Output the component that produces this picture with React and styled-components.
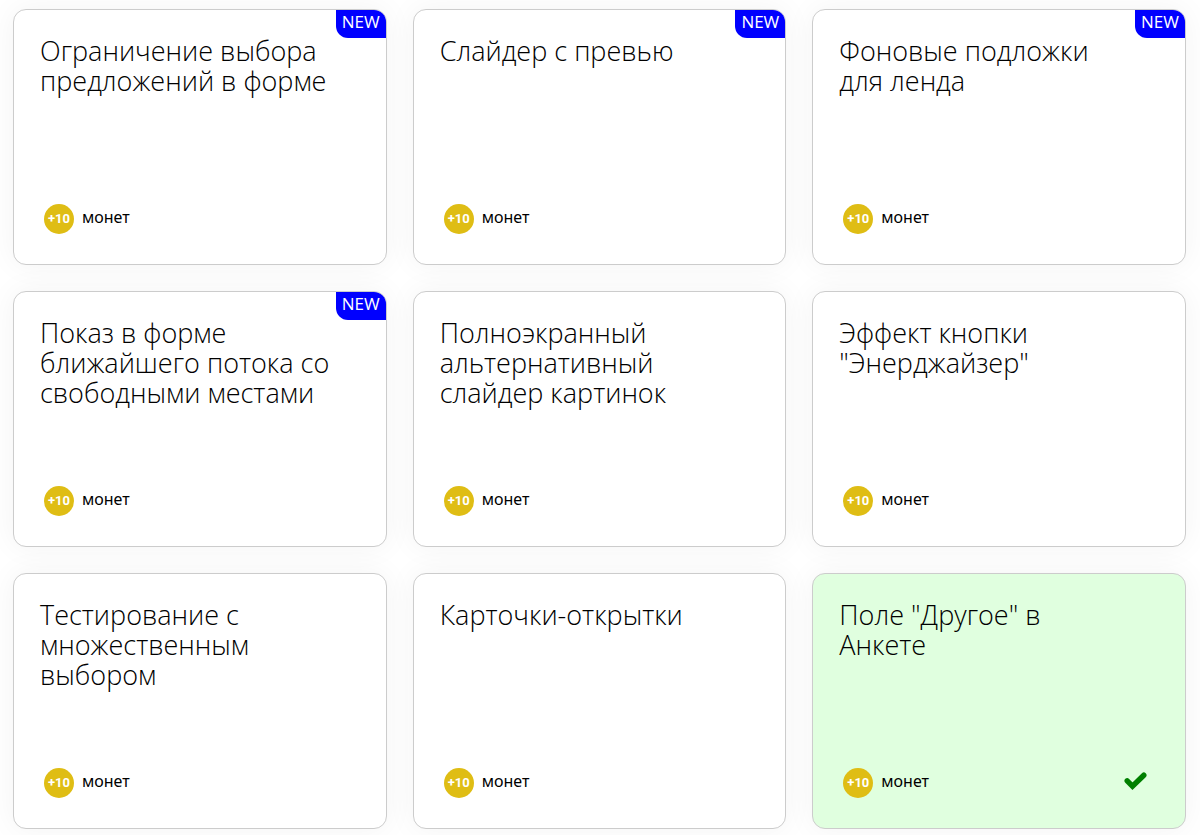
import React from "react";
import styled, { createGlobalStyle } from "styled-components";

const GlobalStyle = createGlobalStyle`
* {
box-sizing: border-box;
}
body {
margin: 0;
background: #fff;
color: #000;
font-family: "Noto Sans", "Open Sans", sans-serif;
}
`;

const Grid = styled.main`
display: grid;
grid-template-columns: repeat(3, 1fr);
gap: 26px;
padding: 9px 14px 6px 13px;
`;

const Card = styled.article`
position: relative;
display: flex;
flex-direction: column;
justify-content: space-between;
min-height: 256px;
padding: 26px 56px 30px 26px;
background: ${props => (props.$done ? "#e0ffdf" : "#fff")};
border: 1px solid #ccc;
border-radius: 13px;
box-shadow: 0 0 30px rgba(0, 0, 0, 0.05);
`;

const Title = styled.h2`
margin: 0;
font-family: "Open Sans", sans-serif;
font-size: 27px;
font-weight: 300;
line-height: 30px;
`;

const Badge = styled.span`
position: absolute;
top: 0;
right: 0;
padding: 0 6px;
height: 28px;
background: #00f;
border-radius: 0 12px 0 12px;
color: #fff;
font-family: "Open Sans", sans-serif;
font-size: 17px;
line-height: 24px;
`;

const Reward = styled.div`
display: flex;
align-items: flex-start;
gap: 8px;
padding-left: 4px;
font-size: 16px;
line-height: 27px;
`;

const Coin = styled.span`
width: 30px;
height: 30px;
background: #dfbd14;
border-radius: 50%;
color: #fff;
font-family: Roboto, sans-serif;
font-size: 13px;
font-weight: 700;
line-height: 30px;
text-align: center;
`;

const Check = styled.svg`
position: absolute;
right: 38px;
bottom: 38px;
width: 23px;
height: 18px;
`;

const cards = [
  { title: "Ограничение выбора предложений в форме", isNew: true },
  { title: "Слайдер с превью", isNew: true },
  { title: "Фоновые подложки для ленда", isNew: true },
  { title: "Показ в форме ближайшего потока со свободными местами", isNew: true },
  { title: "Полноэкранный альтернативный слайдер картинок" },
  { title: 'Эффект кнопки "Энерджайзер"' },
  { title: "Тестирование с множественным выбором" },
  { title: "Карточки-открытки" },
  { title: 'Поле "Другое" в Анкете', done: true },
];

const App = () => {
  return (
    <>
      <GlobalStyle />
      <Grid>
        {cards.map(card => (
          <Card key={card.title} $done={card.done}>
            <Title>{card.title}</Title>
            {card.isNew ? <Badge>NEW</Badge> : null}
            <Reward>
              <Coin>+10</Coin>
              монет
            </Reward>
            {card.done ? (
              <Check viewBox="0 0 23 18" aria-hidden="true">
                <path
                  d="M3.2 8.8 L8.5 14.2 L19.8 3.2"
                  fill="none"
                  stroke="#008000"
                  strokeWidth="5.4"
                  strokeLinejoin="miter"
                  strokeLinecap="round"
                />
              </Check>
            ) : null}
          </Card>
        ))}
      </Grid>
    </>
  );
};

export default App;
